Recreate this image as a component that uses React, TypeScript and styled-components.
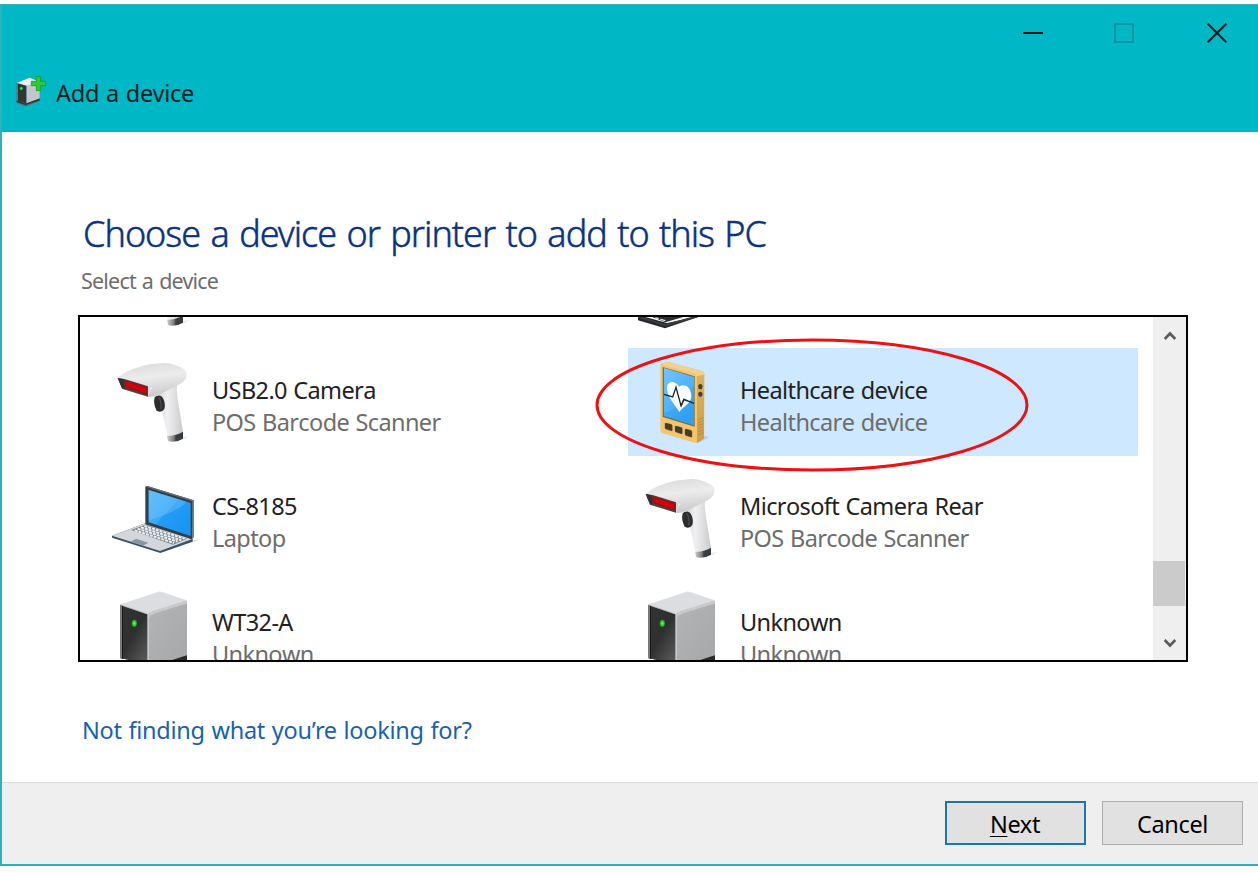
import React from "react";
import styled, { createGlobalStyle } from "styled-components";

const GlobalStyle = createGlobalStyle`
  *, *::before, *::after { box-sizing: border-box; }
  body {
    margin: 0;
    background: #fff;
    font-family: "Noto Sans", "Open Sans", sans-serif;
    color: #1c1c1c;
    overflow: hidden;
  }
`;

const Page = styled.div`
  height: 874px;
  padding: 4px 0 8px;
`;

const Dialog = styled.main`
  display: flex;
  flex-direction: column;
  height: 862px;
  border: solid #2db2bb;
  border-width: 1px 0 2px 2px;
  background: #fff;
`;

const Header = styled.header`
  flex: none;
  height: 127px;
  background: #00b7c5;
`;

const Controls = styled.div`
  display: flex;
  justify-content: flex-end;
  height: 56px;
`;

const ControlButton = styled.button<{ $dim?: boolean }>`
  display: flex;
  align-items: center;
  justify-content: center;
  width: 92px;
  padding: 0;
  border: 0;
  background: none;
  color: ${(p) => (p.$dim ? "#0794a0" : "#04181a")};
  &:first-child { padding-left: 2px; }
  &:last-child { width: 83px; padding-left: 1px; margin-left: 5px; }
`;

const TitleRow = styled.div`
  display: flex;
  align-items: center;
  gap: 8px;
  height: 34px;
  margin-top: 13px;
  padding-left: 12px;
`;

const Title = styled.span`
  padding-top: 4px;
  font-size: 23.5px;
  line-height: 34px;
  letter-spacing: -0.25px;
  word-spacing: 1px;
  color: #041c1e;
`;

const Body = styled.section`
  flex: 1;
  padding: 78px 70px 0 76px;
`;

const Heading = styled.h1`
  margin: 0;
  padding-left: 5px;
  font-size: 36px;
  font-weight: 300;
  line-height: 48px;
  letter-spacing: -1px;
  word-spacing: 2px;
  color: #0a3282;
  -webkit-text-stroke: 0.5px #0a3282;
  white-space: nowrap;
`;

const Hint = styled.p`
  margin: 7px 0 0;
  padding-left: 3px;
  font-size: 21.5px;
  line-height: 32px;
  letter-spacing: -0.8px;
  word-spacing: 1.2px;
  color: #6e6e6e;
`;

const ListBox = styled.div`
  position: relative;
  display: flex;
  width: 1110px;
  height: 347px;
  margin-top: 18px;
  border: 2px solid #000;
  overflow: hidden;
`;

const DeviceGrid = styled.div`
  display: grid;
  flex: 1;
  grid-template-columns: 510px 510px;
  grid-auto-rows: 108px;
  gap: 8px 18px;
  margin-top: -85px;
  padding-left: 20px;
`;

const DeviceItem = styled.div<{ $selected?: boolean }>`
  display: flex;
  gap: 10px;
  padding: 6px;
  background: ${(p) => (p.$selected ? "#cde8ff" : "transparent")};
`;

const DeviceText = styled.div`
  display: flex;
  flex-direction: column;
  padding-top: 20px;
  font-size: 23.5px;
  font-kerning: none;
  line-height: 32px;
  letter-spacing: -0.6px;
  word-spacing: 0.8px;
  white-space: nowrap;
`;

const DeviceName = styled.span`
  color: #222;
`;

const DeviceKind = styled.span`
  color: #6d6d6d;
`;

const Highlight = styled.svg`
  position: absolute;
  left: 514px;
  top: 20px;
  pointer-events: none;
`;

const Scrollbar = styled.div`
  display: flex;
  flex-direction: column;
  flex: none;
  width: 33px;
  padding-right: 1px;
  background: #efefef;
`;

const ScrollArrow = styled.div<{ $down?: boolean }>`
  display: flex;
  align-items: center;
  justify-content: center;
  height: 34px;
  padding-top: ${(p) => (p.$down ? 0 : 3)}px;
  padding-left: 1px;
`;

const ScrollTrack = styled.div`
  flex: 1;
  padding-top: 210px;
`;

const ScrollThumb = styled.div`
  height: 45px;
  background: #cbcbcb;
`;

const HelpLink = styled.a`
  display: block;
  margin-top: 51px;
  padding-left: 4px;
  font-size: 23.5px;
  line-height: 34px;
  letter-spacing: -0.27px;
  word-spacing: 0.9px;
  color: #1762b0;
`;

const Footer = styled.footer`
  display: flex;
  justify-content: flex-end;
  flex: none;
  gap: 16px;
  height: 82px;
  padding: 18px 15px 0 0;
  border-top: 1px solid #dcdcdc;
  background: #efefef;
`;

const ActionButton = styled.button<{ $primary?: boolean }>`
  width: 141px;
  height: 44px;
  padding: ${(p) => (p.$primary ? "2px 1px 0 0" : "2px 0 0")};
  border: ${(p) => (p.$primary ? "2px solid #1f74b0" : "1px solid #adadad")};
  box-shadow: ${(p) => (p.$primary ? "inset 0 0 0 1px #d3e9f8" : "none")};
  background: #e1e1e1;
  font: 23.5px/36px "Noto Sans", "Open Sans", sans-serif;
  letter-spacing: -0.35px;
  color: #000;
`;

const AccessKey = styled.span`
  text-decoration: underline;
  text-decoration-thickness: 1px;
  text-underline-offset: 3px;
`;

function ScannerIcon() {
  return (
    <svg width="96" height="96" viewBox="18 42 288 288">
      <defs>
        <linearGradient id="scHead" x1="0" y1="0" x2="0.25" y2="1">
          <stop offset="0" stopColor="#d8d8d8" />
          <stop offset="0.5" stopColor="#ececec" />
          <stop offset="1" stopColor="#cdcdcd" />
        </linearGradient>
        <linearGradient id="scHandle" x1="0" y1="0" x2="1" y2="0">
          <stop offset="0" stopColor="#d4d5d7" />
          <stop offset="0.35" stopColor="#f0f0f1" />
          <stop offset="0.75" stopColor="#d9dadc" />
          <stop offset="1" stopColor="#c6c8ca" />
        </linearGradient>
        <linearGradient id="scEnd" x1="0" y1="0" x2="1" y2="0">
          <stop offset="0" stopColor="#d0d0d0" />
          <stop offset="0.45" stopColor="#777" />
          <stop offset="0.55" stopColor="#3c4043" />
          <stop offset="1" stopColor="#34383b" />
        </linearGradient>
      </defs>
      <path d="M248 291l20-3-18 12z" fill="#ececec" />
      <path d="M176 164L231 134Q229 160 236 195L249 276Q230 289 202 286Q196 250 186 214Z" fill="url(#scHandle)" />
      <path d="M201 287Q227 288 249 275L249 296Q228 309 204 303Z" fill="url(#scEnd)" />
      <path d="M164 172Q173 162 186 170Q198 185 193 207Q184 220 170 212Q159 192 164 172Z" fill="#2d2d2d" />
      <path d="M175 172Q184 176 183 208" fill="none" stroke="#4a4a4a" strokeWidth="4" />
      <path d="M53 114Q72 95 110 83Q150 70 196 69Q222 71 251 87Q262 96 259 108Q258 122 240 132L180 163Q160 173 144 170Q146 158 156 143Q130 131 53 114Z" fill="url(#scHead)" />
      <path d="M53 114Q100 119 153 142L144 170Q104 158 66 146Q62 133 53 114Z" fill="#d5d5d5" />
      <path d="M53 114L73 117L144 139L144 170L66 146Z" fill="#5a3a3c" />
      <path d="M53 114L70 118L74 145L66 143Z" fill="#303335" />
      <path d="M72 121L141 141L141 163L76 141Z" fill="#981016" />
      <path d="M76 125L138 144L138 159L80 139Z" fill="#d90008" />
    </svg>
  );
}

function LaptopIcon() {
  return (
    <svg width="96" height="96" viewBox="18 0 288 288">
      <defs>
        <linearGradient id="lapScreen" x1="0" y1="0" x2="1" y2="1">
          <stop offset="0" stopColor="#55b7f9" />
          <stop offset="0.45" stopColor="#38a9f7" />
          <stop offset="0.46" stopColor="#229cf6" />
          <stop offset="1" stopColor="#1594f4" />
        </linearGradient>
      </defs>
      <path d="M272 213L300 206L282 216Z" fill="#ddd" />
      <path d="M36 197L136 160L278 206L278 215L181 249L36 203Z" fill="#3b5264" />
      <path d="M36 197L136 160L277 207L180 243Z" fill="#d3d7dc" />
      <path d="M93 180L137 164L261 206L219 224Z" fill="#7b848c" />
      <g stroke="#edf0f3" strokeWidth="6" strokeDasharray="9 3">
        <path d="M104 181L222 219" />
        <path d="M113 176L233 215" />
        <path d="M123 172L244 211" />
        <path d="M133 168L254 206" />
      </g>
      <path d="M92 215L108 206L145 218L129 227Z" fill="#8d969f" />
      <path d="M136 50L142 48L281 91L281 201L275 208L136 163Z" fill="#333e46" />
      <path d="M142 48L281 91L281 95L139 51Z" fill="#657078" />
      <path d="M277 94L281 92L281 202L276 206Z" fill="#777f84" />
      <path d="M146 60L272 99L272 198L146 157Z" fill="url(#lapScreen)" />
      <path d="M146 60L260 95Q238 122 146 151Z" fill="#80caff" opacity="0.35" />
    </svg>
  );
}

function TowerIcon() {
  return (
    <svg width="96" height="96" viewBox="108 48 288 288">
      <defs>
        <linearGradient id="twFront" x1="0" y1="0" x2="0.8" y2="1">
          <stop offset="0" stopColor="#333" />
          <stop offset="0.55" stopColor="#303030" />
          <stop offset="1" stopColor="#555" />
        </linearGradient>
        <linearGradient id="twSide" x1="0" y1="0" x2="1" y2="1">
          <stop offset="0" stopColor="#b3b5b7" />
          <stop offset="1" stopColor="#a5a7a9" />
        </linearGradient>
        <radialGradient id="twLed">
          <stop offset="0" stopColor="#6dff62" />
          <stop offset="0.6" stopColor="#27d52b" />
          <stop offset="1" stopColor="#168c1b" />
        </radialGradient>
      </defs>
      <path d="M150 264L234 282L351 270L351 254L330 256Z" fill="#292929" />
      <path d="M149 108Q150 103 156 101L266 65Q271 64 276 66L351 91L351 99L233 132Z" fill="#dcdde1" />
      <path d="M232 136Q233 130 242 126L345 94L351 96L351 256L300 272L232 282Z" fill="url(#twSide)" />
      <path d="M232 136Q232 129 242 126L342 94L351 96L351 100L249 132Q240 135 237 144L237 282H231Z" fill="#c9cacc" />
      <path d="M150 105L232 133L232 280L150 264Z" fill="url(#twFront)" />
      <path d="M150 105L156 107L156 266L150 264Z" fill="#77797a" />
      <path d="M156 107L159 108L159 267L156 266Z" fill="#171717" />
      <path d="M150 104L233 132" stroke="#a0a0a0" strokeWidth="1.5" />
      <ellipse cx="193" cy="160" rx="8" ry="11" fill="url(#twLed)" />
    </svg>
  );
}

function HealthIcon() {
  return (
    <svg width="96" height="96" viewBox="132 132 288 288">
      <defs>
        <linearGradient id="hcScreen" x1="0" y1="0" x2="0.6" y2="1">
          <stop offset="0" stopColor="#70c1fa" />
          <stop offset="0.5" stopColor="#43adf8" />
          <stop offset="1" stopColor="#2f9ff0" />
        </linearGradient>
        <linearGradient id="hcSide" x1="0" y1="0" x2="0" y2="1">
          <stop offset="0" stopColor="#e1b660" />
          <stop offset="1" stopColor="#cf9d43" />
        </linearGradient>
      </defs>
      <path d="M325 398L358 382L343 377Z" fill="#a9bfd0" opacity="0.6" />
      <path d="M211 164Q212 160 235 156L338 184Q343 187 343 193L342 386L322 399L310 390L309 196Z" fill="url(#hcSide)" />
      <path d="M211 163L233 156L338 184Q343 187 342 194L318 199Z" fill="#f1d28d" />
      <path d="M211 169Q211 162 218 164L313 190Q321 193 321 202L321 393Q321 400 313 398L219 370Q211 367 211 360Z" fill="#f3c66d" />
      <path d="M218 171L314 199L314 350L218 321Z" fill="#746f4c" />
      <path d="M222 174L312 201L312 346L222 318Z" fill="url(#hcScreen)" />
      <path d="M222 174L312 201L312 225Q260 300 222 309Z" fill="#93d0fb" opacity="0.22" />
      <path d="M268 306C258 287 234 265 231 239C228 214 252 207 268 230C284 218 306 234 304 261C302 281 279 290 268 306Z" fill="#f8fcff" />
      <path d="M222 253L248 261L258 232L273 287L282 268L312 280" fill="none" stroke="#1d2a33" strokeWidth="4" />
      <path d="M273 289L282 268L292 273" fill="none" stroke="#1d2a33" strokeWidth="4" />
      <g fill="#453c2c" stroke="#635337" strokeWidth="1">
        <path d="M225 341Q225 338 229 339L243 343Q247 344 247 348L247 360Q247 364 243 362L229 358Q225 357 225 353Z" />
        <path d="M255 350Q255 347 259 348L273 352Q277 353 277 357L277 369Q277 373 273 371L259 367Q255 366 255 362Z" />
        <path d="M285 359Q285 356 289 357L302 361Q306 362 306 366L306 379Q306 383 302 381L289 377Q285 376 285 372Z" />
      </g>
      <ellipse cx="331" cy="230" rx="6.5" ry="8" fill="#49402d" />
      <ellipse cx="331" cy="253" rx="6.5" ry="8" fill="#49402d" />
      <g stroke="#b3873a" strokeWidth="2.5">
        <path d="M325 329L340 323M325 338L340 332M325 347L340 341M325 356L340 350M325 365L340 359M325 374L340 368" />
      </g>
    </svg>
  );
}

function DarkBaseIcon() {
  return (
    <svg width="96" height="96" viewBox="132 -216 288 288">
      <path d="M144 15L231 39L329 18L340 16L225 55L144 31Z" fill="#25272a" />
      <path d="M144 17L225 43L336 12V18L226 49L144 23Z" fill="#3a3d40" />
      <path d="M165 12L226 37L310 12Z" fill="#2b2e31" />
      <path d="M196 23L206 26M211 28L226 32" stroke="#e2e4e5" strokeWidth="3.5" />
    </svg>
  );
}

function AddDeviceIcon() {
  return (
    <svg width="34" height="34" viewBox="42 222 102 102">
      <path d="M50 301L76 310L119 295L119 303L77 319L50 308Z" fill="#30383a" />
      <path d="M50 308L77 317L119 303" fill="none" stroke="#808889" strokeWidth="2" />
      <path d="M50 249L89 233L119 245L119 252L80 258Z" fill="#ecedef" />
      <path d="M79 258L119 245L119 295L79 310Z" fill="#c3c7c9" />
      <path d="M50 249L79 257L79 310L50 302Z" fill="#313536" />
      <path d="M50 249L53 250L53 303L50 302Z" fill="#8b9294" />
      <ellipse cx="64" cy="265" rx="4" ry="5" fill="#39e43c" />
      <path d="M109 229H122V244H137V257H122V272H109V257H94V244H109Z" fill="#2acb35" stroke="#149d2a" strokeWidth="2.5" />
    </svg>
  );
}

type Device = {
  icon: React.ComponentType;
  name?: string;
  kind?: string;
  selected?: boolean;
};

const devices: Device[] = [
  { icon: ScannerIcon },
  { icon: DarkBaseIcon },
  { icon: ScannerIcon, name: "USB2.0 Camera", kind: "POS Barcode Scanner" },
  { icon: HealthIcon, name: "Healthcare device", kind: "Healthcare device", selected: true },
  { icon: LaptopIcon, name: "CS-8185", kind: "Laptop" },
  { icon: ScannerIcon, name: "Microsoft Camera Rear", kind: "POS Barcode Scanner" },
  { icon: TowerIcon, name: "WT32-A", kind: "Unknown" },
  { icon: TowerIcon, name: "Unknown", kind: "Unknown" },
];

export default function App() {
  return (
    <Page>
      <GlobalStyle />
      <Dialog>
        <Header>
          <Controls>
            <ControlButton aria-label="Minimize">
              <svg width="20" height="20" viewBox="0 0 20 20">
                <path d="M0 10H20" stroke="currentColor" strokeWidth="2" />
              </svg>
            </ControlButton>
            <ControlButton $dim aria-label="Maximize">
              <svg width="20" height="20" viewBox="0 0 20 20">
                <path d="M1 1H19V19H1Z" fill="none" stroke="currentColor" strokeWidth="2" />
              </svg>
            </ControlButton>
            <ControlButton aria-label="Close">
              <svg width="20" height="20" viewBox="0 0 20 20">
                <path d="M0.7 0.7L19.3 19.3M19.3 0.7L0.7 19.3" stroke="currentColor" strokeWidth="2" />
              </svg>
            </ControlButton>
          </Controls>
          <TitleRow>
            <AddDeviceIcon />
            <Title>Add a device</Title>
          </TitleRow>
        </Header>
        <Body>
          <Heading>Choose a device or printer to add to this PC</Heading>
          <Hint>Select a device</Hint>
          <ListBox>
            <DeviceGrid>
              {devices.map(({ icon: Icon, name, kind, selected }, i) => (
                <DeviceItem key={i} $selected={selected}>
                  <Icon />
                  {name && (
                    <DeviceText>
                      <DeviceName>{name}</DeviceName>
                      <DeviceKind>{kind}</DeviceKind>
                    </DeviceText>
                  )}
                </DeviceItem>
              ))}
            </DeviceGrid>
            <Scrollbar>
              <ScrollArrow>
                <svg width="12" height="10" viewBox="0 0 12 10">
                  <path d="M0.7 8L6 2.5L11.3 8" fill="none" stroke="#5c5c5c" strokeWidth="2.7" />
                </svg>
              </ScrollArrow>
              <ScrollTrack>
                <ScrollThumb />
              </ScrollTrack>
              <ScrollArrow $down>
                <svg width="12" height="10" viewBox="0 0 12 10">
                  <path d="M0.7 2L6 7.5L11.3 2" fill="none" stroke="#5c5c5c" strokeWidth="2.7" />
                </svg>
              </ScrollArrow>
            </Scrollbar>
            <Highlight width="436" height="136" viewBox="594 337 436 136">
              <ellipse cx="812" cy="405" rx="215" ry="65" fill="none" stroke="#ee1111" strokeWidth="3" />
            </Highlight>
          </ListBox>
          <HelpLink>Not finding what you’re looking for?</HelpLink>
        </Body>
        <Footer>
          <ActionButton $primary>
            <AccessKey>N</AccessKey>ext
          </ActionButton>
          <ActionButton>Cancel</ActionButton>
        </Footer>
      </Dialog>
    </Page>
  );
}
